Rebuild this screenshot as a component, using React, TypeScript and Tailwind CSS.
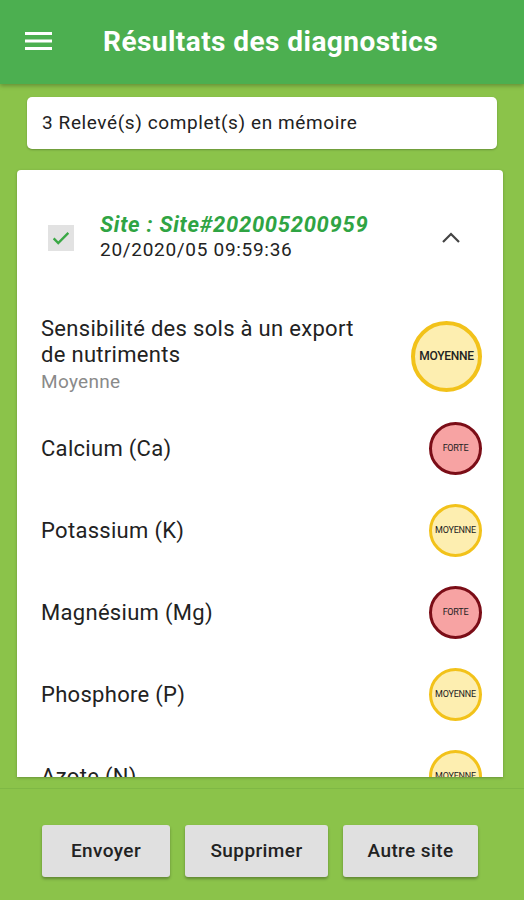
import React from 'react';

type Level = 'MOYENNE' | 'FORTE';

const rows: { label: string; level: Level }[] = [
  { label: 'Calcium (Ca)', level: 'FORTE' },
  { label: 'Potassium (K)', level: 'MOYENNE' },
  { label: 'Magnésium (Mg)', level: 'FORTE' },
  { label: 'Phosphore (P)', level: 'MOYENNE' },
  { label: 'Azote (N)', level: 'MOYENNE' },
];

const actions = [
  { label: 'Envoyer', w: 'w-[128px]' },
  { label: 'Supprimer', w: 'w-[143px]' },
  { label: 'Autre site', w: 'w-[135px]' },
];

const Badge = ({ level, big }: { level: Level; big?: boolean }) => {
  const colors =
    level === 'FORTE'
      ? 'bg-[#f7a3a3] border-[#7b0d17]'
      : 'bg-[#fdeeb0] border-[#f2c21a]';
  const size = big
    ? 'w-[71px] h-[71px] border-[4px] text-[12px] font-medium'
    : 'w-[53px] h-[53px] border-[3px] text-[9px]';
  return (
    <div className={`${size} ${colors} shrink-0 rounded-full flex items-center justify-center text-[#222] tracking-tight`}>
      {level}
    </div>
  );
};

const App: React.FC = () => {
  return (
    <div className="w-[524px] h-[900px] flex flex-col bg-[#8bc34a] overflow-hidden" style={{ fontFamily: 'Roboto, "Noto Sans", sans-serif' }}>
      {/* Toolbar */}
      <div className="h-[84px] shrink-0 bg-[#4caf50] flex items-center pl-[25px] shadow-[0_2px_4px_rgba(0,0,0,0.25)] z-10">
        <svg width="27" height="20" viewBox="0 0 27 20" className="mt-[-2px]">
          <rect x="0" y="1" width="27" height="3" fill="#fff" />
          <rect x="0" y="8.5" width="27" height="3" fill="#fff" />
          <rect x="0" y="16" width="27" height="3" fill="#fff" />
        </svg>
        <h1 className="ml-[51px] text-white text-[28px] tracking-[0.45px] font-bold leading-none">Résultats des diagnostics</h1>
      </div>

      {/* Summary */}
      <div className="mx-[27px] mt-[13px] h-[52px] bg-white rounded-[5px] shadow-[0_1px_2px_rgba(0,0,0,0.25)] flex items-center px-[15px] text-[19px] tracking-[0.6px] text-[#222]">
        3 Relevé(s) complet(s) en mémoire
      </div>

      {/* Diagnostic card */}
      <div className="ml-[17px] mr-[21px] mt-[21px] h-[607px] bg-white rounded-t-[4px] shadow-[0_1px_3px_rgba(0,0,0,0.25)] overflow-hidden">
        <div className="flex items-center pl-[31px] pr-[42px] pt-[43px]">
          <div className="w-[26px] h-[26px] bg-[#e2e2e2] flex items-center justify-center">
            <svg width="22" height="22" viewBox="0 0 24 24" fill="none" stroke="#3aa845" strokeWidth="2.6">
              <path d="M4 12.5l5 5L20 6.5" />
            </svg>
          </div>
          <div className="ml-[26px] flex-1">
            <div className="text-[22px] tracking-[0.7px] font-bold italic text-[#2fa443] leading-[24px]">Site : Site#202005200959</div>
            <div className="text-[19px] tracking-[0.7px] text-[#222] leading-[26px]">20/2020/05 09:59:36</div>
          </div>
          <svg width="20" height="12" viewBox="0 0 20 12" fill="none" stroke="#444" strokeWidth="2.2">
            <path d="M2 10l8-8 8 8" />
          </svg>
        </div>

        <div className="flex items-center pl-[24px] pr-[21px] mt-[53px]">
          <div className="flex-1 tracking-[0.3px]">
            <div className="text-[22px] text-[#222] leading-[26px]">Sensibilité des sols à un export<br />de nutriments</div>
            <div className="text-[19px] text-[#8a8a8a] leading-[28px]">Moyenne</div>
          </div>
          <Badge level="MOYENNE" big />
        </div>

        <div className="flex flex-col mt-[26px] gap-[29px]">
          {rows.map((r) => (
            <div key={r.label} className="flex items-center pl-[24px] pr-[21px]">
              <div className="flex-1 text-[22px] tracking-[0.3px] text-[#222]">{r.label}</div>
              <Badge level={r.level} />
            </div>
          ))}
        </div>
      </div>

      {/* Actions */}
      <div className="flex-1 border-t border-[#7fb845] flex items-start gap-[15px] pl-[42px] pt-[36px] mt-[11px]">
        {actions.map((a) => (
          <button key={a.label} className={`${a.w} h-[52px] bg-[#e0e0e0] rounded-[3px] shadow-[0_2px_3px_rgba(0,0,0,0.3)] text-[19px] tracking-[0.4px] font-medium text-[#222]`}>
            {a.label}
          </button>
        ))}
      </div>
    </div>
  );
};

export default App;
